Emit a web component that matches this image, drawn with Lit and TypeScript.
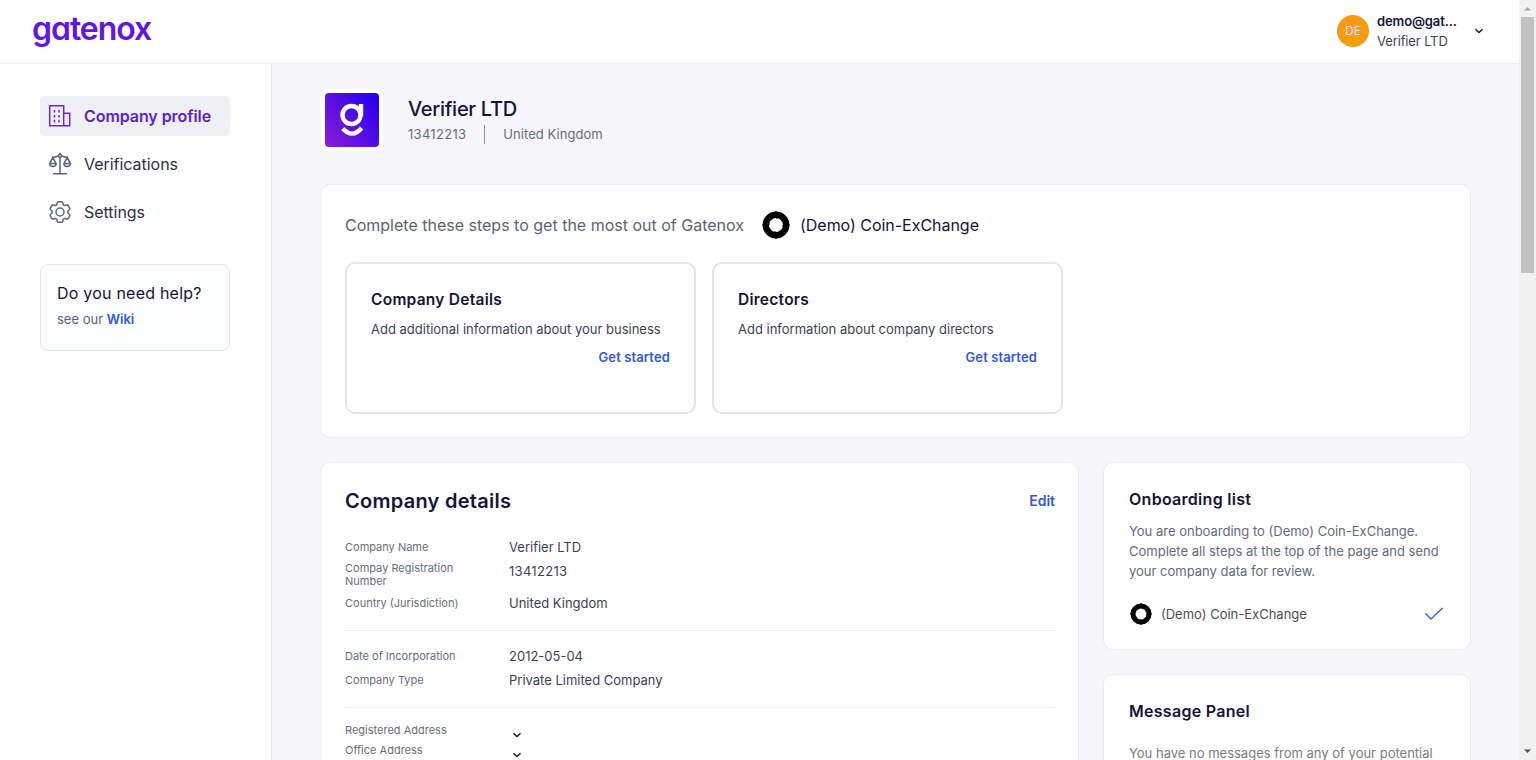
import { LitElement, html, css, svg } from "lit";
import { customElement } from "lit/decorators.js";

const chevron = (size: number) => html`<svg class="chev" width=${size} height=${size} viewBox="0 0 10 10" fill="none" stroke="currentColor" stroke-width="1.4"><path d="M1.5 3.2 5 6.6 8.5 3.2" /></svg>`;

const ring = (size: number) => html`<svg class="ring" width=${size} height=${size} viewBox="0 0 28 28">
  <circle cx="14" cy="14" r="10.2" fill="none" stroke="#000" stroke-width="6.4" />
  <path d="M14 0v3M14 25v3M0 14h3M25 14h3" stroke="#000" stroke-width="1.2" />
  <circle cx="14" cy="14" r="6.9" fill="none" stroke="#000" stroke-width=".8" stroke-dasharray="1.6 3.8" />
  <path d="M7 6.5 8.6 8M21.5 6.5 20 8.2M4.5 12l2 .6M23.5 18l-2-1.2" stroke="#777" stroke-width=".4" />
</svg>`;

const icons = {
  building: svg`<path d="M1.700 1.700h14v20h-14zM15.700 9.200h6v12.500h-6" /><path d="M6.500 6v12.500M11 6v12.500" stroke-dasharray="2.600 2.300" />`,
  scales: svg`<path d="M12 5v16.500M5 21.800h14M4.300 5.200c3 .6 4.200-.9 6.200-1.300M19.700 5.200c-3 .6-4.200-.9-6.200-1.300M12 .8v1.600" /><path d="M4.800 5.300 1.700 11.600h6.400zM19.200 5.300l-3.200 6.300h6.400z" /><path d="M1.700 11.600c0 4 6.400 4 6.400 0M16 11.600c0 4 6.400 4 6.400 0" /><circle cx="12" cy="3.800" r="1.500" />`,
  gear: svg`<circle cx="12" cy="12" r="4" /><path transform="translate(12 12) scale(1.150) translate(-12 -12)" stroke-width="1.300" d="M9.594 3.940c.09-.542.56-.94 1.110-.94h2.593c.55 0 1.020.398 1.110.94l.213 1.281c.063.374.313.686.645.87.074.04.147.083.22.127.325.196.72.257 1.075.124l1.217-.456a1.125 1.125 0 0 1 1.370.49l1.296 2.247a1.125 1.125 0 0 1-.26 1.431l-1.003.827c-.293.241-.438.613-.43.992a7.723 7.723 0 0 1 0 .255c-.008.378.137.75.43.991l1.004.827c.424.35.534.955.26 1.430l-1.298 2.247a1.125 1.125 0 0 1-1.369.491l-1.217-.456c-.355-.133-.75-.072-1.076.124a6.470 6.470 0 0 1-.22.128c-.331.183-.581.495-.644.869l-.213 1.281c-.09.543-.56.94-1.110.94h-2.594c-.55 0-1.019-.398-1.110-.94l-.213-1.281c-.062-.374-.312-.686-.644-.87a6.520 6.520 0 0 1-.22-.127c-.325-.196-.72-.257-1.076-.124l-1.217.456a1.125 1.125 0 0 1-1.369-.49l-1.297-2.247a1.125 1.125 0 0 1 .26-1.431l1.004-.827c.292-.24.437-.613.43-.991a6.932 6.932 0 0 1 0-.255c.007-.38-.138-.751-.43-.992l-1.004-.827a1.125 1.125 0 0 1-.26-1.430l1.297-2.247a1.125 1.125 0 0 1 1.370-.491l1.216.456c.356.133.751.072 1.076-.124.072-.044.146-.086.22-.128.332-.183.582-.495.644-.869l.214-1.280Z" />`,
};

@customElement("app-root")
export class AppRoot extends LitElement {
  static styles = css`
    :host { display: block; height: 760px; overflow: hidden; font-family: "Inter", sans-serif; font-size: 13px; letter-spacing: 0; color: #3d3f57; background: #f6f6fb; }
    * { box-sizing: border-box; }
    h1, h2, h3, p { margin: 0; font-weight: 400; }
    svg { display: block; flex: none; }
    a { color: #3058e0; font-weight: 600; text-decoration: none; }
    .window { display: flex; height: 760px; }
    .page { flex: 1; display: flex; flex-direction: column; min-width: 0; }
    .topbar { height: 64px; flex: none; display: flex; align-items: center; justify-content: space-between; padding: 0 35px 0 32px; background: #fff; border-bottom: 1px solid #e9e9ee; }
    .brand { font-size: 32px; line-height: 40px; font-weight: 600; letter-spacing: -1.05px; color: #6314e6; font-feature-settings: "cv11"; padding-bottom: 6px; }
    .account { display: flex; align-items: center; gap: 8px; padding-bottom: 2px; }
    .avatar { width: 32px; height: 32px; border-radius: 50%; background: #f39c12; color: #fdeccd; display: grid; place-items: center; font-size: 12px; }
    .who { width: 86px; line-height: 20px; letter-spacing: -0.12px; }
    .who strong { display: block; font-weight: 600; color: #14143a; }
    .chev { color: #14142e; margin: 0 0 0 3px; }
    .body { flex: 1; display: flex; min-height: 0; }
    .side { width: 272px; flex: none; background: #fff; border-right: 1px solid #e9e9ee; padding: 32px 41px 32px 40px; }
    .nav { display: flex; flex-direction: column; gap: 8px; }
    .item { height: 40px; display: flex; align-items: center; gap: 12px; padding-left: 8px; border-radius: 4px; font-size: 16px; color: #2d2f47; letter-spacing: -0.03px; }
    .item svg { color: #5b6580; }
    .item.on { background: #eff0f4; color: #5d1fd1; font-weight: 600; letter-spacing: -0.07px; }
    .item.on svg { color: #6a25d9; }
    .help { margin: 32px 0 0 0; height: 87px; border: 1px solid #e3e6ec; border-radius: 8px; background: #fbfcfe; padding: 16px; }
    .help h3 { font-size: 16px; line-height: 24px; color: #14143a; letter-spacing: 0.22px; }
    .help p { line-height: 20px; margin-top: 4px; color: #5b6478; }
    .main { flex: 1; overflow: hidden; padding: 26px 48px 0; }
    .hero { display: flex; gap: 25px; height: 94px; padding-left: 1px; }
    .tile { width: 62px; height: 62px; border-radius: 8px; background: #fff; padding: 4px; margin-top: -1px; }
    .hero h1 { font-size: 20px; font-weight: 500; line-height: 28px; color: #14143a; letter-spacing: -0.28px; padding-top: 5px; }
    .meta { display: flex; align-items: center; color: #666e80; line-height: 20px; padding-top: 1px; letter-spacing: 0.05px; }
    .number { letter-spacing: 0.3px; }
    .bar { width: 1px; height: 19px; background: #8b8f9b; margin: 0 18px; }
    .card { background: #fff; border: 1px solid #ececf1; border-radius: 10px; }
    .steps { height: 254px; padding: 0 24px; }
    .steps-head { display: flex; align-items: center; height: 77px; padding-top: 3px; font-size: 16px; color: #5b6478; }
    .steps-head .ring { margin: 0 10px 0 18px; }
    .dark { color: #14143a; letter-spacing: -0.03px; }
    .step-row { display: flex; gap: 16px; }
    .step { width: 351px; height: 152px; border: 2px solid #e4e4e9; border-radius: 10px; padding: 24px; }
    .step h3 { font-size: 15.500px; font-weight: 600; line-height: 24px; color: #14143a; letter-spacing: 0.26px; }
    .step p { line-height: 20px; margin-top: 7px; }
    .step a { display: block; text-align: right; line-height: 20px; margin-top: 8px; letter-spacing: 0.12px; }
    .cols { display: flex; gap: 24px; margin-top: 24px; align-items: flex-start; }
    .details { flex: 1; height: 400px; padding: 24px 23px 24px 24px; }
    .title { display: flex; justify-content: space-between; align-items: center; line-height: 28px; margin-bottom: 20px; }
    .title h2 { font-size: 20px; font-weight: 600; color: #14143a; letter-spacing: 0.27px; }
    .title a { font-size: 14px; }
    .row { display: flex; min-height: 24px; }
    .row dt { width: 164px; font-size: 11px; line-height: 14px; padding: 5px 40px 0 0; color: #666e80; letter-spacing: 0; }
    .row dd { margin: 0; line-height: 24px; }
    dl { margin: 0; }
    .row.tall { min-height: 32px; }
    .row.tall dt { line-height: 13px; padding-top: 3px; }
    .row.tall dd { letter-spacing: 0.3px; }
    .row.tight { min-height: 20px; }
    .row.tight dt { padding-top: 2px; line-height: 15px; }
    .row.tight dd { padding-top: 9px; line-height: 11px; height: 20px; }
    .sep { height: 1px; background: #ececf1; margin: 15px 0 13px; }
    .aside { width: 368px; flex: none; display: flex; flex-direction: column; gap: 24px; }
    .onboard { height: 188px; padding: 24px 24px 24px 25px; }
    .messages { height: 200px; padding: 24px 24px 24px 25px; }
    .aside h3 { font-size: 16px; font-weight: 600; line-height: 24px; color: #14143a; letter-spacing: 0.28px; }
    .aside p { line-height: 20px; margin-top: 10px; color: #5f6b80; }
    .messages p { margin-top: 20px; color: #7c7c80; }
    .entry { display: flex; align-items: center; margin-top: 22px; color: #4d4d55; }
    .entry .ring { margin: 0 9px 0 1px; }
    .entry .tick { margin-left: auto; margin-right: 2px; }
    .scroll { width: 17px; background: #f1f1f1; display: flex; flex-direction: column; align-items: center; }
    .thumb { width: 13px; height: 256px; background: #c1c1c1; }
    .grow { flex: 1; }
  `;

  private icon(body: unknown) {
    return html`<svg width="24" height="24" viewBox="0 0 24 24" fill="none" stroke="currentColor" stroke-width="1.5">${body}</svg>`;
  }

  private row(label: string, value: unknown, extra = "") {
    return html`<div class="row ${extra}"><dt>${label}</dt><dd>${value}</dd></div>`;
  }

  render() {
    return html`<div class="window">
      <div class="page">
        <header class="topbar">
          <div class="brand">gatenox</div>
          <div class="account"><div class="avatar">DE</div><div class="who"><strong>demo@gat...</strong>Verifier LTD</div>${chevron(10)}</div>
        </header>
        <div class="body">
          <aside class="side">
            <nav class="nav">
              <div class="item on">${this.icon(icons.building)}<span>Company profile</span></div>
              <div class="item">${this.icon(icons.scales)}<span>Verifications</span></div>
              <div class="item">${this.icon(icons.gear)}<span>Settings</span></div>
            </nav>
            <div class="help"><h3>Do you need help?</h3><p>see our <a>Wiki</a></p></div>
          </aside>
          <main class="main">
            <section class="hero">
              <div class="tile"><svg width="54" height="54" viewBox="0 0 54 54">
                <defs><linearGradient id="g" x1="0" y1="1" x2="1" y2=".2"><stop offset="0" stop-color="#8a1fd6" /><stop offset="1" stop-color="#2a00f0" /></linearGradient></defs>
                <rect width="54" height="54" rx="4" fill="url(#g)" />
                <g fill="none" stroke="#fff" stroke-width="4.400"><circle cx="26.500" cy="22" r="9" /><path d="M36 11v12" /><path d="M17.800 35.500q9.500 10.500 18.800-.5" /></g>
              </svg></div>
              <div><h1>Verifier LTD</h1><div class="meta"><span class="number">13412213</span><i class="bar"></i><span>United Kingdom</span></div></div>
            </section>
            <section class="card steps">
              <div class="steps-head"><span>Complete these steps to get the most out of Gatenox</span>${ring(28)}<span class="dark">(Demo) Coin-ExChange</span></div>
              <div class="step-row">
                <div class="step"><h3>Company Details</h3><p>Add additional information about your business</p><a>Get started</a></div>
                <div class="step"><h3>Directors</h3><p>Add information about company directors</p><a>Get started</a></div>
              </div>
            </section>
            <div class="cols">
              <section class="card details">
                <div class="title"><h2>Company details</h2><a>Edit</a></div>
                <dl>
                  ${this.row("Company Name", "Verifier LTD")}${this.row("Compay Registration Number", "13412213", "tall")}${this.row("Country (Jurisdiction)", "United Kingdom")}
                  <div class="sep"></div>
                  ${this.row("Date of Incorporation", "2012-05-04")}${this.row("Company Type", "Private Limited Company")}
                  <div class="sep"></div>
                  ${this.row("Registered Address", chevron(10), "tight")}${this.row("Office Address", chevron(10), "tight")}
                </dl>
              </section>
              <div class="aside">
                <section class="card onboard"><h3>Onboarding list</h3><p>You are onboarding to (Demo) Coin-ExChange. Complete all steps at the top of the page and send your company data for review.</p>
                  <div class="entry">${ring(22)}<span>(Demo) Coin-ExChange</span><svg class="tick" width="20" height="14" viewBox="0 0 20 14" fill="none" stroke="#3f66e0" stroke-width="1.600"><path d="M1.500 6.500 7 12 18.500 1" /></svg></div>
                </section>
                <section class="card messages"><h3>Message Panel</h3><p>You have no messages from any of your potential</p></section>
              </div>
            </div>
          </main>
        </div>
      </div>
      <div class="scroll">
        <svg width="17" height="17" viewBox="0 0 17 17"><path d="M5 10.500 8.500 7 12 10.500z" fill="#a3a3a3" /></svg>
        <div class="thumb"></div><div class="grow"></div>
        <svg width="17" height="17" viewBox="0 0 17 17"><path d="M5 6.500 8.500 10 12 6.500z" fill="#505050" /></svg>
      </div>
    </div>`;
  }
}
